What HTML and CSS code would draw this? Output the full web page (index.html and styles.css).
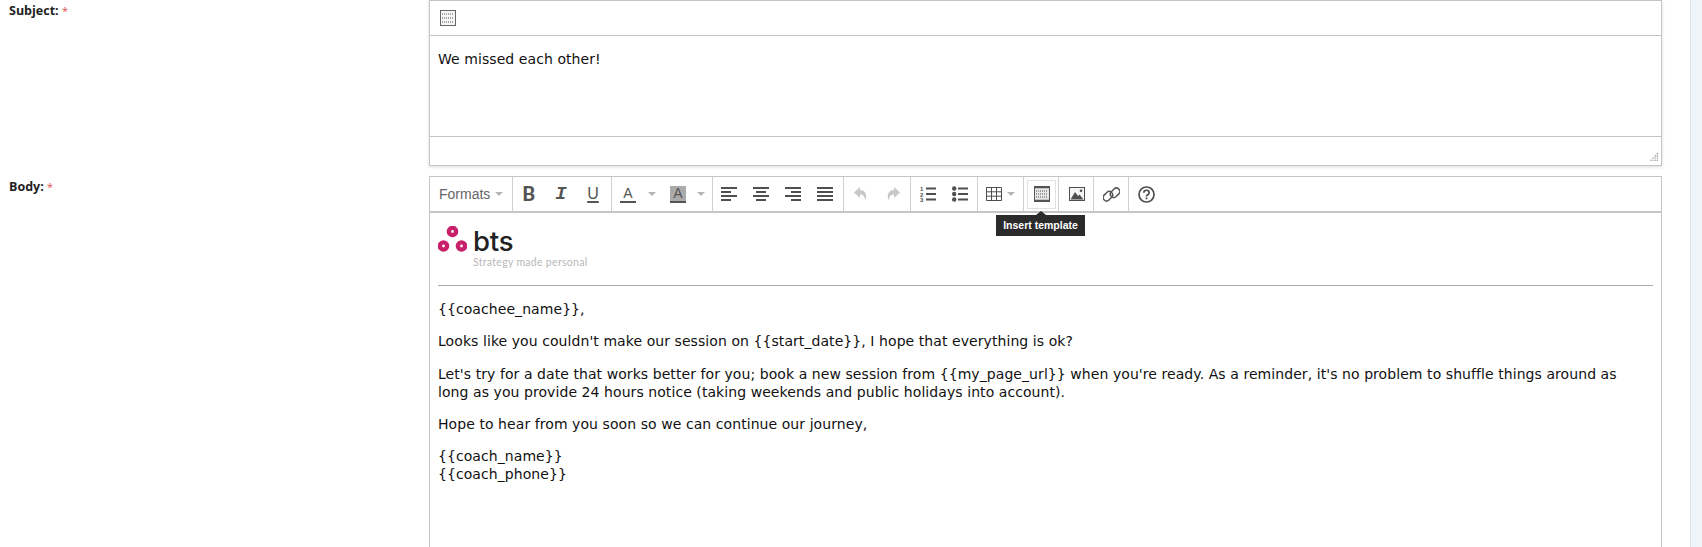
FILE: index.html
```html
<!DOCTYPE html>
<html lang="en">
<head>
  <meta charset="UTF-8">
  <title>Email template</title>
  <link rel="stylesheet" href="styles.css">
</head>
<body>
  <div class="page">
    <div class="form">
      <div class="row row-subject">
        <div class="label">Subject: <span class="req">*</span></div>
        <div class="editor editor-subject">
          <div class="toolbar toolbar-small">
            <span class="tool-first">
              <svg class="icon" viewBox="0 0 16 16"><rect x=".5" y=".5" width="15" height="15" fill="#f6f6f6" stroke="#666"/><path d="M2 4h12M2 8h12M2 12h12" stroke="#555" stroke-dasharray="1 1"/></svg>
            </span>
          </div>
          <div class="subject-text">We missed each other!</div>
          <div class="statusbar">
            <svg class="resize" viewBox="0 0 10 10"><path d="M8 1h1v1H8zM6 3h1v1H6zM8 3h1v1H8zM4 5h1v1H4zM6 5h1v1H6zM8 5h1v1H8zM2 7h1v1H2zM4 7h1v1H4zM6 7h1v1H6zM8 7h1v1H8z" fill="#777"/></svg>
          </div>
        </div>
      </div>
      <div class="row">
        <div class="label">Body: <span class="req">*</span></div>
        <div class="editor editor-body">
          <div class="toolbar">
            <span class="tool-group group-formats"><span class="formats">Formats</span><span class="caret"></span></span>
            <span class="tool-group group-text">
              <span class="glyph glyph-b">B</span><span class="glyph glyph-i">I</span><span class="glyph glyph-u">U</span>
            </span>
            <span class="tool-group group-color">
              <span class="glyph-a">A</span><span class="caret"></span>
              <span class="glyph-a glyph-a-bg">A</span><span class="caret"></span>
            </span>
            <span class="tool-group group-align">
              <svg class="icon" viewBox="0 0 16 16"><path d="M0 1h16v2H0zM0 5h10v2H0zM0 9h16v2H0zM0 13h10v2H0z" fill="#4f4f4f"/></svg>
              <svg class="icon" viewBox="0 0 16 16"><path d="M0 1h16v2H0zM3 5h10v2H3zM0 9h16v2H0zM3 13h10v2H3z" fill="#4f4f4f"/></svg>
              <svg class="icon" viewBox="0 0 16 16"><path d="M0 1h16v2H0zM6 5h10v2H6zM0 9h16v2H0zM6 13h10v2H6z" fill="#4f4f4f"/></svg>
              <svg class="icon" viewBox="0 0 16 16"><path d="M0 1h16v2H0zM0 5h16v2H0zM0 9h16v2H0zM0 13h16v2H0z" fill="#4f4f4f"/></svg>
            </span>
            <span class="tool-group group-undo">
              <svg class="icon" viewBox="0 0 16 16"><path d="M7 1 1 6.500 7 12V8.500c3 0 4.500 1.500 5.500 6 2-6-.5-10.500-5.500-10.500z" fill="#c8c8c8"/></svg>
              <svg class="icon" viewBox="0 0 16 16"><path d="M9 1l6 5.500L9 12V8.500c-3 0-4.500 1.500-5.500 6-2-6 .5-10.500 5.500-10.500z" fill="#c8c8c8"/></svg>
            </span>
            <span class="tool-group group-lists">
              <svg class="icon" viewBox="0 0 16 16"><path d="M6 1.500h10v2H6zM6 7h10v2H6zM6 12.500h10v2H6z" fill="#4f4f4f"/><text class="list-num" x="0" y="5">1</text><text class="list-num" x="0" y="10.500">2</text><text class="list-num" x="0" y="16">3</text></svg>
              <svg class="icon" viewBox="0 0 16 16"><path d="M6 1.500h10v2H6zM6 7h10v2H6zM6 12.500h10v2H6z" fill="#4f4f4f"/><circle cx="2.200" cy="2.500" r="2.200" fill="#4f4f4f"/><circle cx="2.200" cy="8" r="2.200" fill="#4f4f4f"/><circle cx="2.200" cy="13.500" r="2.200" fill="#4f4f4f"/></svg>
            </span>
            <span class="tool-group group-table">
              <svg class="icon" viewBox="0 0 16 16"><path d="M.5 1.500h15v13H.500zM.5 5.800h15M.5 10.200h15M5.500 1.500v13M10.500 1.500v13" fill="none" stroke="#4f4f4f"/></svg><span class="caret"></span>
            </span>
            <span class="tool-group group-template">
              <span class="tool-active"><svg class="icon" viewBox="0 0 16 16"><rect x=".5" y=".5" width="15" height="15" fill="#e8e8e8" stroke="#555"/><path d="M1 1.500h14M1 14.500h14" stroke="#555" stroke-width="1.500"/><path d="M2 5h12M2 8h12M2 11h12" stroke="#555" stroke-dasharray="1 1"/></svg></span>
            </span>
            <span class="tool-group group-icon group-image">
              <svg class="icon" viewBox="0 0 16 16"><rect x=".5" y="1.500" width="15" height="13" fill="#f4f4f4" stroke="#4f4f4f"/><path d="M1.500 13.500 6 6l3 4 1.500-1.500 4 5z" fill="#4f4f4f"/><circle cx="12" cy="4.700" r="1.300" fill="#4f4f4f"/></svg>
            </span>
            <span class="tool-group group-icon">
              <svg class="icon icon-big" viewBox="0 0 17 17" fill="none" stroke="#555" stroke-width="1.500"><rect x="8.700" y="1.600" width="6.800" height="10.400" rx="3.300" transform="rotate(45 12.100 6.800)"/><rect x="1.500" y="5" width="6.800" height="10.400" rx="3.300" transform="rotate(45 4.900 10.200)"/></svg>
            </span>
            <span class="tool-group group-icon group-last">
              <svg class="icon icon-big" viewBox="0 0 17 17" fill="none" stroke="#4f4f4f"><circle cx="8.500" cy="8.500" r="7.500" stroke-width="1.700"/><path d="M5.800 6.800c0-3.400 5.400-3.400 5.400 0 0 2.100-2.700 1.800-2.700 3.600" stroke-width="1.700"/><path d="M7.600 11.500h1.800v1.800H7.600z" fill="#4f4f4f" stroke="none"/></svg>
            </span>
          </div>
          <div class="tooltip"><span class="tooltip-arrow"></span>Insert template</div>
          <div class="body-text">
            <div class="logo">
              <svg class="logo-dots" viewBox="0 0 29 26"><g fill="none" stroke="#c8206a" stroke-width="4.400"><circle cx="14.500" cy="5.500" r="3.600"/><circle cx="5.500" cy="20" r="3.600"/><circle cx="23.500" cy="20" r="3.600"/></g></svg>
              <div class="logo-words">
                <div class="logo-name">bts</div>
                <div class="logo-tag">Strategy made personal</div>
              </div>
            </div>
            <hr class="rule">
            <p>{{coachee_name}},</p>
            <p>Looks like you couldn't make our session on {{start_date}}, I hope that everything is ok?</p>
            <p>Let's try for a date that works better for you; book a new session from {{my_page_url}} when you're ready. As a reminder, it's no problem to shuffle things around as long as you provide 24 hours notice (taking weekends and public holidays into account).</p>
            <p>Hope to hear from you soon so we can continue our journey,</p>
            <p>{{coach_name}}<br>{{coach_phone}}</p>
          </div>
        </div>
      </div>
    </div>
    <div class="side-panel"></div>
  </div>
</body>
</html>
```

FILE: styles.css
```css
html, body {
  margin: 0;
  height: 100%;
  overflow: hidden;
  background: #fff;
}
.page {
  display: flex;
  height: 547px;
  overflow: hidden;
}
.form {
  width: 1690px;
  flex: none;
}
.side-panel {
  flex: 1;
  background: #eef4f8;
  border-left: 1px solid #dfe6ea;
}
.row {
  display: flex;
}
.row-subject {
  margin-bottom: 10px;
}
.label {
  width: 429px;
  flex: none;
  box-sizing: border-box;
  padding: 2px 0 0 9px;
  font: bold 12.500px "Open Sans", sans-serif;
  color: #222;
}
.req {
  color: #d9534f;
  font-weight: normal;
  font-size: 11px;
}
.editor {
  position: relative;
  width: 1233px;
  box-sizing: border-box;
  border: 1px solid #c5c5c5;
}
.editor-subject {
  height: 166px;
  box-shadow: 0 1px 3px rgba(0, 0, 0, .15);
}
.editor-body {
  height: 371px;
  border-bottom: 0;
}
.toolbar {
  display: flex;
  height: 36px;
  align-items: stretch;
  border-bottom: 2px solid #c5c5c5;
  box-sizing: border-box;
}
.toolbar-small {
  height: 35px;
  border-bottom-width: 1px;
}
.tool-first {
  display: flex;
  align-items: center;
  padding-left: 10px;
}
.icon {
  width: 16px;
  height: 16px;
  display: block;
}
.icon-big {
  width: 17px;
  height: 17px;
}
.subject-text {
  height: 100px;
  box-sizing: border-box;
  padding: 14px 8px;
  font: 14px/18px "DejaVu Sans", sans-serif;
  letter-spacing: .07px;
  color: #111;
}
.statusbar {
  height: 29px;
  border-top: 1px solid #c5c5c5;
  position: relative;
  box-sizing: border-box;
}
.resize {
  position: absolute;
  right: 2px;
  bottom: 2px;
  width: 11px;
  height: 11px;
}
.tool-group {
  display: flex;
  align-items: center;
  box-sizing: border-box;
  border-right: 1px solid #d0d0d0;
}
.group-formats { width: 83px; padding-left: 9px; }
.group-text { width: 99px; padding-left: 0; }
.group-color { width: 101px; padding-left: 8px; }
.group-align { width: 131px; padding-left: 8px; gap: 16px; }
.group-undo { width: 67px; padding-left: 9px; gap: 16px; }
.group-lists { width: 67px; padding-left: 9px; gap: 16px; }
.group-table { width: 46px; padding-left: 8px; }
.group-template { width: 35px; padding-left: 3px; }
.group-icon { width: 35px; padding-left: 9px; }
.group-image { padding-left: 10px; }
.group-last { border-right: 0; }
.formats {
  font: 14px "Liberation Sans", sans-serif;
  color: #666;
}
.caret {
  width: 0;
  height: 0;
  margin-left: 5px;
  border: 4px solid transparent;
  border-top-color: #b5b5b5;
  border-bottom: 0;
}
.glyph {
  width: 32px;
  text-align: center;
  color: #555;
}
.glyph-b { font: bold 20px Roboto, sans-serif; }
.glyph-i { font: italic bold 19px "Liberation Mono", monospace; }
.glyph-u {
  font: 16px "Liberation Sans", sans-serif;
  text-decoration: underline;
  text-decoration-thickness: 2px;
  text-underline-offset: 2px;
}
.glyph-a {
  width: 16px;
  height: 15px;
  text-align: center;
  font: 14px/15px "Liberation Sans", sans-serif;
  color: #555;
  border-bottom: 2px solid #555;
}
.glyph-a-bg {
  margin-left: 14px;
  background: #aaa;
}
.group-color .caret {
  margin-left: 12px;
}
.group-color .glyph-a-bg + .caret {
  margin-left: 11px;
}
.list-num {
  font: bold 6px "Liberation Sans", sans-serif;
  fill: #4f4f4f;
}
.tool-active {
  display: flex;
  width: 29px;
  height: 29px;
  box-sizing: border-box;
  align-items: center;
  justify-content: center;
  border: 1px solid #e2e2e2;
}
.tooltip {
  position: absolute;
  left: 566px;
  top: 38px;
  width: 89px;
  height: 21px;
  background: #2b2b2b;
  color: #fff;
  font: bold 10.500px/21px "Liberation Sans", sans-serif;
  text-align: center;
}
.tooltip-arrow {
  position: absolute;
  left: 40px;
  top: -4px;
  width: 0;
  height: 0;
  border: 5px solid transparent;
  border-top: 0;
  border-bottom: 4px solid #2b2b2b;
}
.body-text {
  padding: 12px 8px;
  font: 14px/18.200px "DejaVu Sans", sans-serif;
  letter-spacing: .07px;
  color: #111;
}
.body-text p {
  margin: 14px 0;
  padding-right: 6px;
}
.logo {
  display: flex;
  align-items: flex-start;
  height: 60.200px;
}
.logo-dots {
  width: 29px;
  height: 26px;
  margin-top: 1px;
}
.logo-words {
  margin-left: 6px;
  margin-top: 3px;
}
.logo-name {
  font: 500 27.500px/27px Inter, sans-serif;
  letter-spacing: -.2px;
  color: #222;
}
.logo-tag {
  font: 10.500px/10px Lato, sans-serif;
  letter-spacing: .3px;
  color: #b8b8b8;
  margin-top: 2px;
}
.rule {
  margin: 0;
  border: 0;
  border-top: 1px solid #aaa;
}
```
